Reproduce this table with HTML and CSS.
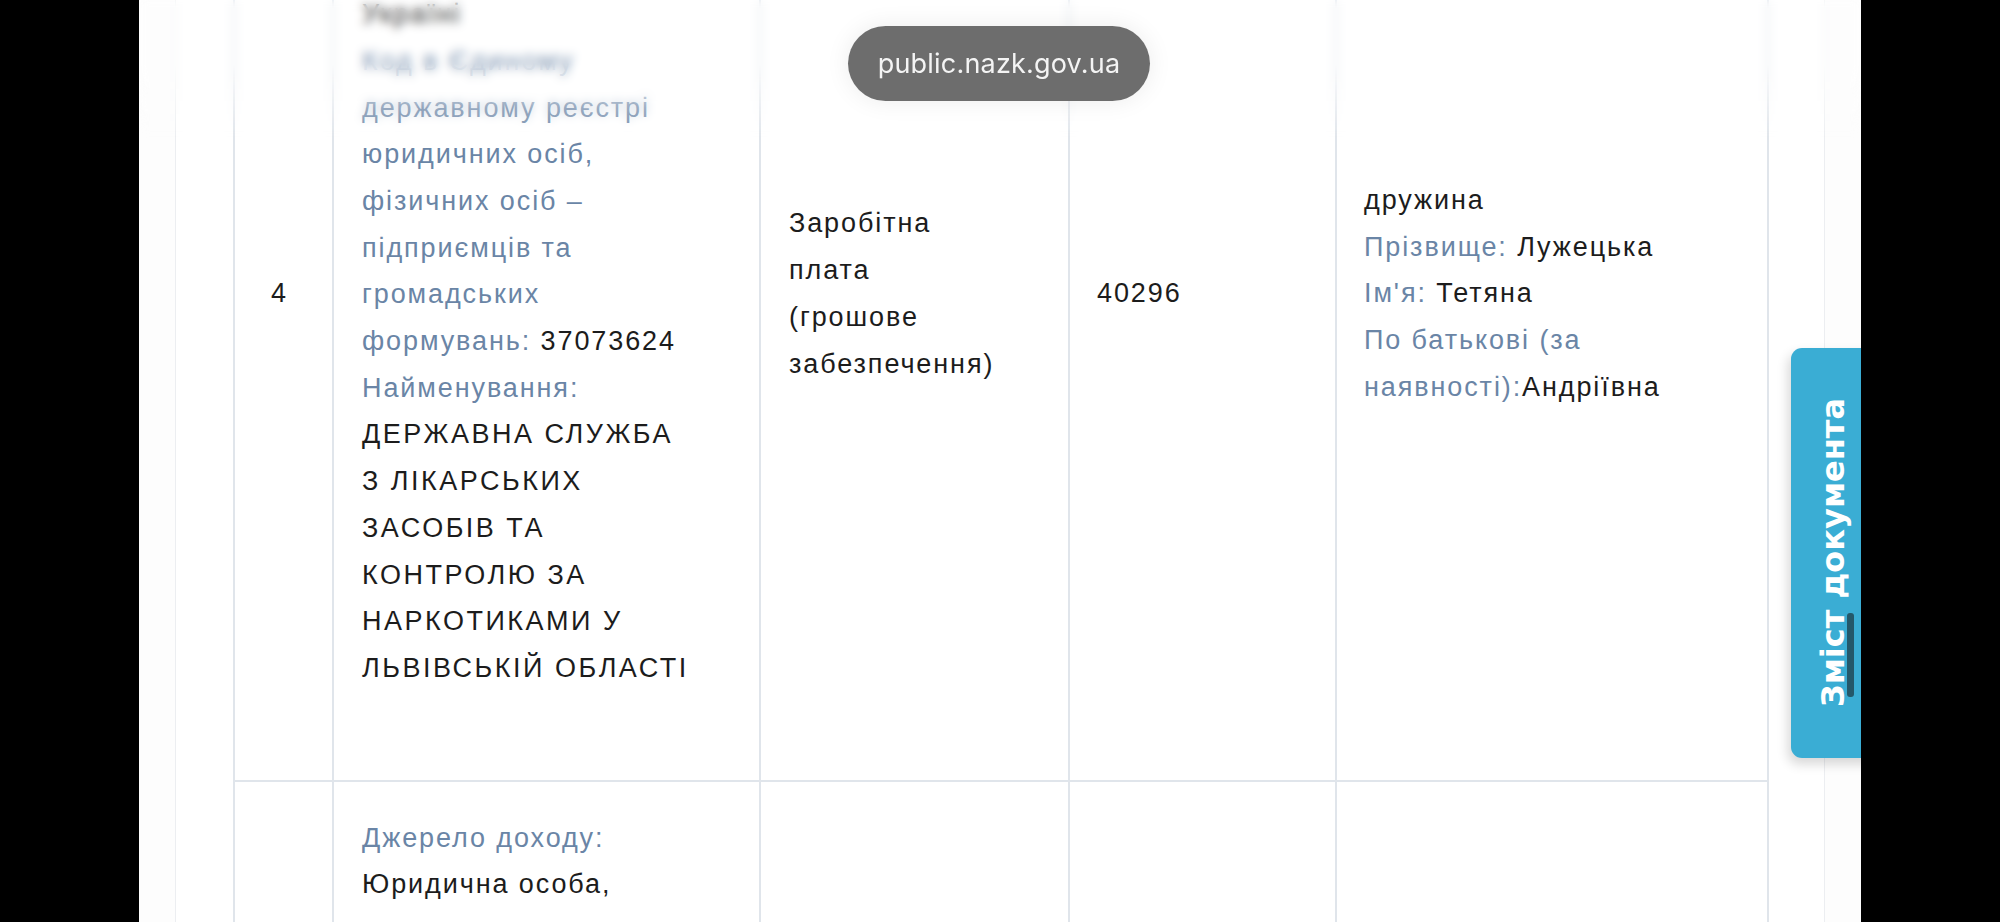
FILE: index.html
```html
<!DOCTYPE html>
<html lang="uk">
<head>
<meta charset="utf-8">
<title>public.nazk.gov.ua</title>
<link rel="stylesheet" href="styles.css">
</head>
<body>
<div class="device">
  <div class="bezel"></div>
  <main class="screen">
    <section class="card">
      <table class="decl">
        <colgroup>
          <col class="c-num"><col class="c-src"><col class="c-type"><col class="c-sum"><col class="c-who">
        </colgroup>
        <tbody>
          <tr>
            <td class="num">4</td>
            <td class="src">
              <div class="field"><span class="lbl">Джерело доходу:</span> <span class="val">Юридична особа, зареєстрована в Україні</span></div>
              <div class="field"><span class="lbl">Код в Єдиному державному реєстрі юридичних осіб, фізичних осіб – підприємців та громадських формувань:</span> <span class="val">37073624</span></div>
              <div class="field"><span class="lbl">Найменування:</span> <span class="val caps">ДЕРЖАВНА СЛУЖБА З ЛІКАРСЬКИХ ЗАСОБІВ ТА КОНТРОЛЮ ЗА НАРКОТИКАМИ У ЛЬВІВСЬКІЙ ОБЛАСТІ</span></div>
            </td>
            <td class="type"><span class="val">Заробітна плата (грошове забезпечення)</span></td>
            <td class="sum"><span class="val">40296</span></td>
            <td class="who">
              <div class="field"><span class="val">дружина</span></div>
              <div class="field"><span class="lbl">Прізвище:</span> <span class="val">Лужецька</span></div>
              <div class="field"><span class="lbl">Ім'я:</span> <span class="val">Тетяна</span></div>
              <div class="field"><span class="lbl">По батькові (за наявності):</span><span class="val">Андріївна</span></div>
            </td>
          </tr>
          <tr>
            <td class="num">5</td>
            <td class="src">
              <div class="field"><span class="lbl">Джерело доходу:</span> <span class="val">Юридична особа, зареєстрована в Україні</span></div>
              <div class="field"><span class="lbl">Код в Єдиному державному реєстрі юридичних осіб, фізичних осіб – підприємців та громадських формувань:</span> <span class="val">37073624</span></div>
              <div class="field"><span class="lbl">Найменування:</span> <span class="val caps">ДЕРЖАВНА СЛУЖБА З ЛІКАРСЬКИХ ЗАСОБІВ ТА КОНТРОЛЮ ЗА НАРКОТИКАМИ У ЛЬВІВСЬКІЙ ОБЛАСТІ</span></div>
            </td>
            <td class="type"><span class="val">Заробітна плата (грошове забезпечення)</span></td>
            <td class="sum"><span class="val">12450</span></td>
            <td class="who">
              <div class="field"><span class="val">дружина</span></div>
              <div class="field"><span class="lbl">Прізвище:</span> <span class="val">Лужецька</span></div>
              <div class="field"><span class="lbl">Ім'я:</span> <span class="val">Тетяна</span></div>
              <div class="field"><span class="lbl">По батькові (за наявності):</span><span class="val">Андріївна</span></div>
            </td>
          </tr>
        </tbody>
      </table>
    </section>

    <div class="top-blur"></div>

    <div class="url-pill">public.nazk.gov.ua</div>

    <button class="toc-tab" type="button">
      <span class="toc-label">Зміст документа</span>
      <i class="toc-mark"></i>
    </button>
  </main>
  <div class="bezel"></div>
</div>
</body>
</html>
```

FILE: styles.css
```css
* { box-sizing: border-box; }

html, body {
  margin: 0;
  padding: 0;
  width: 2000px;
  height: 922px;
  overflow: hidden;
  background: #000;
}

.device {
  position: relative;
  display: flex;
  width: 2000px;
  height: 922px;
}

.bezel {
  flex: 0 0 139px;
  background: #000;
}

.screen {
  position: relative;
  flex: 1 1 auto;
  height: 922px;
  overflow: hidden;
  background: #fdfdfd;
}

.card {
  display: flow-root;
  margin: 0 36px;
  height: 100%;
  padding: 0 57px;
  background: #fff;
  border-left: 1px solid #eceef1;
  border-right: 1px solid #eceef1;
}

.decl {
  margin-top: -184px;
  width: 1534px;
  table-layout: fixed;
  border-collapse: collapse;
  font-family: "Liberation Sans", Arial, sans-serif;
  font-size: 27px;
  line-height: 46.7px;
  letter-spacing: 1.9px;
  color: #1c1c1c;
}

.c-num { width: 99px; }
.c-src { width: 427px; }
.c-type { width: 309px; }
.c-sum { width: 267px; }
.c-who { width: 432px; }

.decl td {
  border: 2px solid #e0e5eb;
  vertical-align: middle;
  padding: 33px 30px 43px 27px;
}

.decl td.num {
  text-align: center;
  padding: 33px 38px 43px 30px;
}

.decl td.src {
  padding: 33px 67px 88px 28px;
}

.decl td.type {
  padding: 33px 62px 43px 28px;
}

.decl td.sum {
  padding: 33px 30px 43px 27px;
}

.field { display: block; }

.lbl { color: #6a85a6; }
.val { color: #1c1c1c; }
.caps { letter-spacing: 2.5px; }

.top-blur {
  position: absolute;
  top: 0;
  left: 0;
  right: 0;
  height: 140px;
  z-index: 1;
  pointer-events: none;
  background: rgba(255, 255, 255, 0.1);
  -webkit-backdrop-filter: blur(5px);
  backdrop-filter: blur(5px);
  -webkit-mask-image: linear-gradient(to bottom, #000 0%, #000 45%, transparent 100%);
  mask-image: linear-gradient(to bottom, #000 0%, #000 45%, transparent 100%);
}

.url-pill {
  position: absolute;
  z-index: 2;
  top: 26px;
  left: 709px;
  width: 302px;
  height: 75px;
  border-radius: 38px;
  background: rgba(104, 104, 104, 0.97);
  box-shadow: 0 0 24px rgba(0, 0, 0, 0.08);
  display: flex;
  align-items: center;
  justify-content: center;
  color: #f4f4f4;
  font-family: "Inter", "Liberation Sans", sans-serif;
  font-size: 27px;
  letter-spacing: 0.2px;
}

.toc-tab {
  position: absolute;
  z-index: 2;
  top: 348px;
  right: -14px;
  width: 84px;
  height: 410px;
  margin: 0;
  padding: 0;
  border: 0;
  border-radius: 11px 0 0 11px;
  background: #3aadd4;
  box-shadow: -3px 6px 12px rgba(0, 0, 0, 0.16);
  display: flex;
  align-items: center;
  justify-content: center;
}

.toc-label {
  writing-mode: vertical-rl;
  transform: rotate(180deg);
  color: #fff;
  font-family: "DejaVu Sans", "Open Sans", sans-serif;
  font-weight: 700;
  font-size: 32px;
  line-height: 1;
  white-space: nowrap;
}

.toc-mark {
  position: absolute;
  left: 56px;
  top: 265px;
  width: 7px;
  height: 84px;
  border-radius: 3px;
  background: #24586a;
}
```
